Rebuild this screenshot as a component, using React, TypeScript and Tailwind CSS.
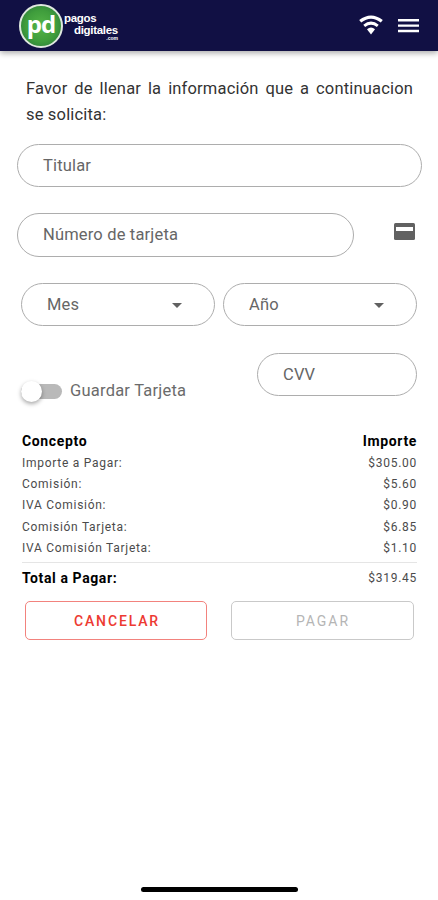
import type { ReactNode } from "react";

const rows = [
  ["Importe a Pagar:", "$305.00"],
  ["Comisión:", "$5.60"],
  ["IVA Comisión:", "$0.90"],
  ["Comisión Tarjeta:", "$6.85"],
  ["IVA Comisión Tarjeta:", "$1.10"],
];

function Field({ className, children }: { className: string; children: ReactNode }) {
  return (
    <div
      className={`flex items-center rounded-full border border-[#adadad] pl-[25px] text-[16.5px] leading-6 tracking-[0.17px] text-[#666] ${className}`}
    >
      {children}
    </div>
  );
}

function Caret() {
  return (
    <svg className="mr-8 h-[5px] w-2.5" viewBox="0 0 10 5" fill="#616161">
      <path d="M0 0h10L5 5z" />
    </svg>
  );
}

function Logo() {
  return (
    <div className="flex items-start">
      <div className="flex h-11 w-11 items-center justify-center rounded-full border-2 border-[#dfe8df] bg-[radial-gradient(circle,#55b548_0%,#3f9d3c_55%,#23703a_100%)] font-['Open_Sans',sans-serif] text-[24px] leading-none font-bold tracking-[-1px] text-white">
        <span className="-mt-1">pd</span>
      </div>
      <div className="ml-px flex flex-col pt-2 font-['Liberation_Sans',sans-serif] text-[11.5px] leading-[12px] font-bold tracking-[-0.3px] text-white">
        <span>pagos</span>
        <span className="ml-[10px]">digitales</span>
        <span className="self-end text-[5px] leading-[5px] tracking-normal">.com</span>
      </div>
    </div>
  );
}

export default function App() {
  return (
    <div className="flex h-[900px] w-[438px] flex-col overflow-hidden bg-white font-[Roboto,sans-serif]">
      <header className="flex h-[51px] shrink-0 items-start justify-between bg-[#111044] pt-1 pr-[19px] pl-[19px] shadow-[0_2px_6px_rgba(0,0,0,0.35)]">
        <Logo />
        <div className="flex items-center pt-[11px]">
          <svg className="h-[21px] w-6" viewBox="0 0 24 21" fill="none" stroke="#fff">
            <path d="M1.2 6.3Q12-2.2 22.8 6.3" strokeWidth="3.2" />
            <path d="M5.2 10.8Q12 5.4 18.8 10.8" strokeWidth="3" />
            <path d="M8 14.2Q12 10.8 16 14.2L12 19.6z" fill="#fff" stroke="none" />
          </svg>
          <svg className="ml-[15px] h-[21px] w-[21px]" viewBox="0 0 21 21" fill="#fff">
            <path d="M0 4h21v2.4H0zM0 9.4h21v2.4H0zM0 14.8h21v2.4H0z" />
          </svg>
        </div>
      </header>

      <main className="flex flex-col">
        <p className="mt-[25px] ml-[26px] w-[387px] text-justify text-[16.5px] leading-[26px] tracking-[0.17px] text-[#333]">
          Favor de llenar la información que a continuacion se solicita:
        </p>

        <Field className="mt-4 ml-[17px] h-[43px] w-[405px] pt-px">Titular</Field>

        <div className="mt-[26px] ml-[17px] flex w-[398px] items-start justify-between">
          <Field className="h-11 w-[337px]">Número de tarjeta</Field>
          <svg className="mt-2.5 h-[17px] w-[21px]" viewBox="0 0 21 17">
            <rect width="21" height="17" rx="1.5" fill="#616161" />
            <path d="M2 4h17v4H2z" fill="#fff" />
          </svg>
        </div>

        <div className="mt-[26px] ml-[21px] flex gap-[8px]">
          <Field className="h-[43px] w-[194px] justify-between pt-px">
            <span>Mes</span>
            <Caret />
          </Field>
          <Field className="h-[43px] w-[194px] justify-between pt-px">
            <span>Año</span>
            <Caret />
          </Field>
        </div>

        <div className="mt-[27px] ml-[21px] flex w-[396px] items-start justify-between">
          <div className="flex items-center pt-[26px]">
            <div className="flex h-[15px] w-[41px] items-center rounded-full bg-[#b9b9b9]">
              <div className="h-[21px] w-[21px] shrink-0 rounded-full bg-white shadow-[0_2px_4px_rgba(0,0,0,0.35)]" />
            </div>
            <span className="ml-2 text-[16.5px] leading-6 tracking-[0.22px] text-[#6b6b6b]">Guardar Tarjeta</span>
          </div>
          <Field className="h-[43px] w-[160px] pt-px">CVV</Field>
        </div>

        <section className="mt-7 ml-[22px] w-[395px]">
          <div className="mb-px flex justify-between text-[14px] leading-[21px] font-bold tracking-[0.65px] text-black">
            <span>Concepto</span>
            <span>Importe</span>
          </div>
          {rows.map(([label, amount]) => (
            <div
              key={label}
              className="flex justify-between text-[12px] leading-[21.2px] tracking-[0.72px] text-[#4b4b4b]"
            >
              <span>{label}</span>
              <span>{amount}</span>
            </div>
          ))}
          <div className="mt-[3px] flex items-center justify-between border-t border-[#e5e5e5] pt-[5px] leading-[21px]">
            <span className="text-[14px] font-bold tracking-[0.6px] text-black">Total a Pagar:</span>
            <span className="text-[12px] tracking-[0.72px] text-[#4b4b4b]">$319.45</span>
          </div>
        </section>

        <div className="mt-[12px] ml-[25px] flex gap-6">
          <button className="h-[39px] w-[182px] rounded-[5px] border border-[#f2827d] pt-px pl-[2px] text-[14px] font-medium tracking-[1.85px] text-[#ed3a32]">
            CANCELAR
          </button>
          <button className="h-[39px] w-[183px] rounded-[5px] border border-[#c9c9c9] pt-px pl-px text-[14px] tracking-[2px] text-[#b5b5b5]">
            PAGAR
          </button>
        </div>
      </main>

      <div className="mt-auto mb-2 h-[5px] w-[157px] self-center rounded-full bg-black" />
    </div>
  );
}
